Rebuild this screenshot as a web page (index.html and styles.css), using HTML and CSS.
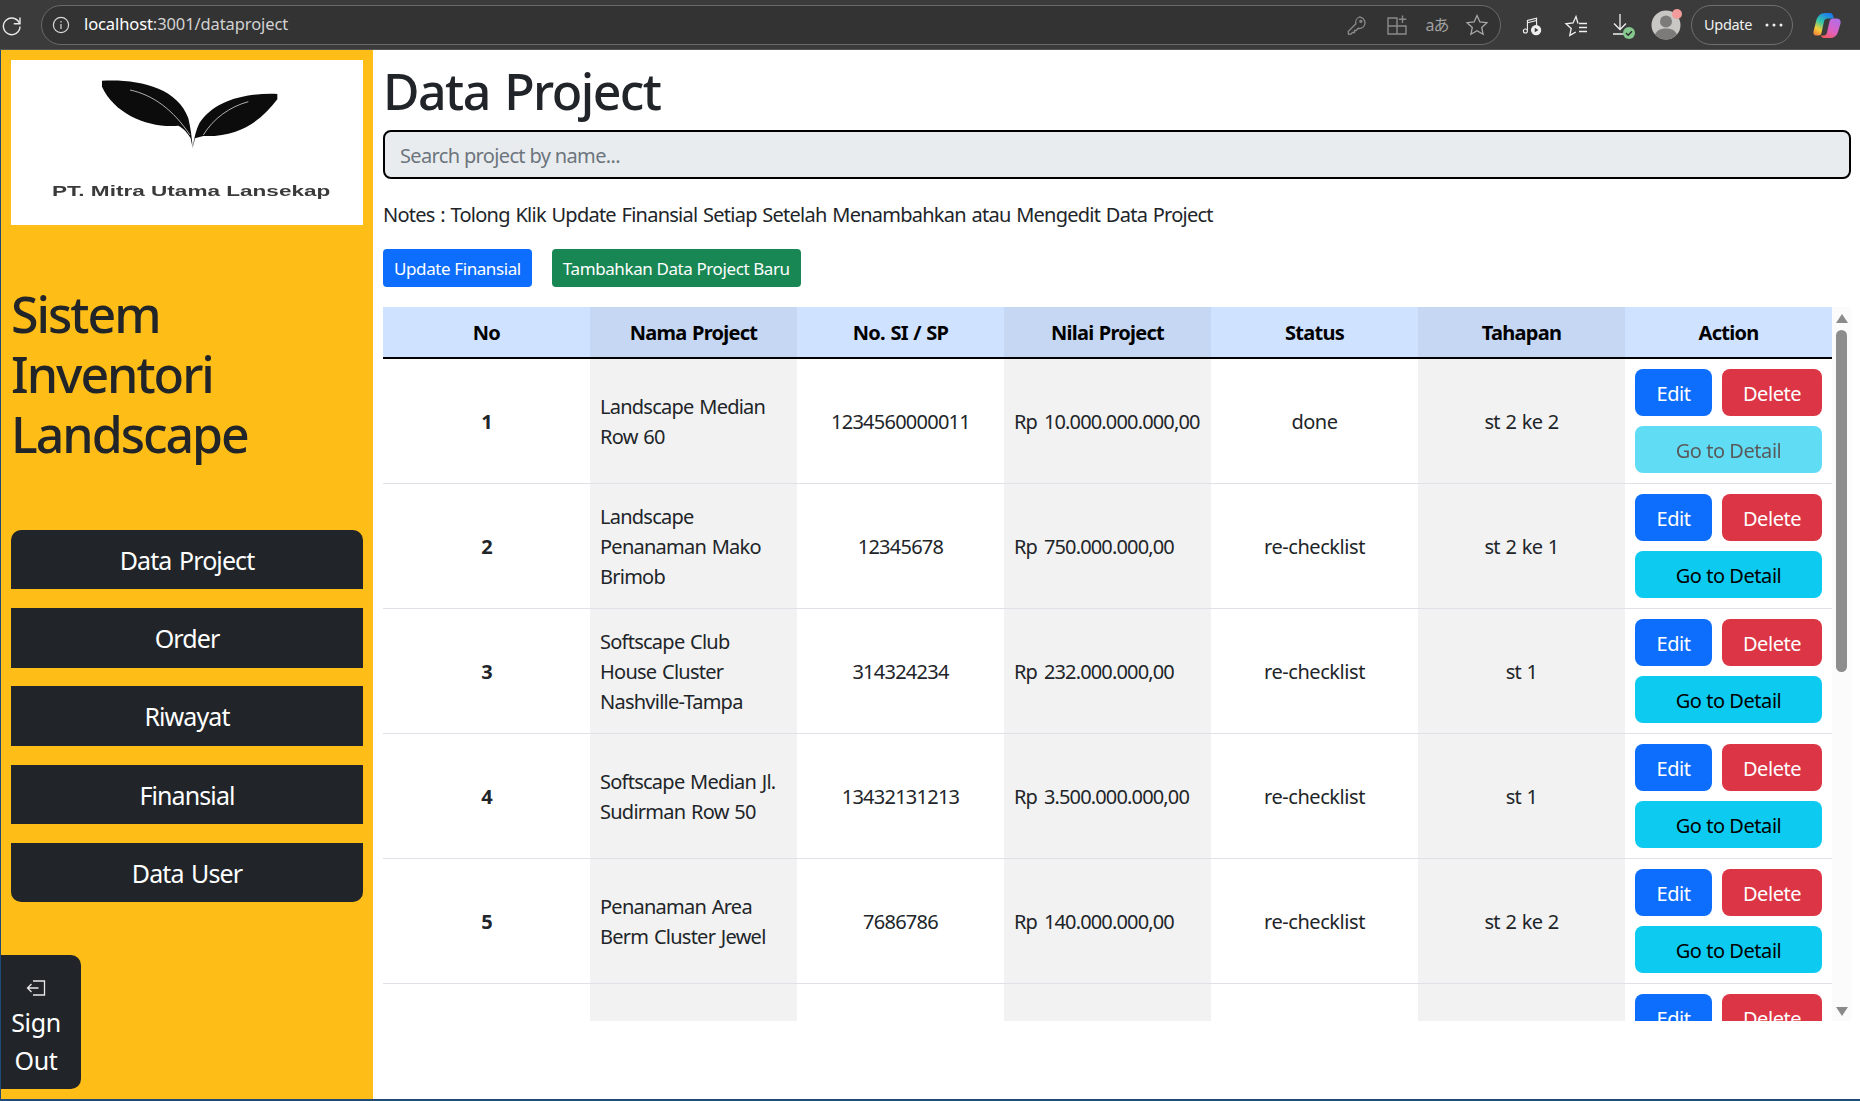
FILE: index.html
```html
<!DOCTYPE html>
<html>
<head>
    <title>Data Project</title>
    <meta name="viewport" content="width=device-width, initial-scale=1">
    <link rel="stylesheet" href="styles.css">
</head>
<body>

<div class="browser-bar">
    <svg class="reload" width="24" height="24" viewBox="0 0 24 24" fill="none" stroke="#e8e8e8" stroke-width="1.4">
        <path d="M19.5 10.5A8.3 8.3 0 1 0 20 13.5"/>
        <path d="M20 4.5v6.2h-6.2"/>
    </svg>
    <div class="address">
        <svg width="20" height="20" viewBox="0 0 20 20" fill="none" stroke="#d8d8d8" stroke-width="1.2">
            <circle cx="10" cy="10" r="7.6"/>
            <path d="M10 9v5M10 6v1.4"/>
        </svg>
        <span class="url"><b>localhost</b>:3001/dataproject</span>
        <div class="address-icons">
            <svg width="24" height="24" viewBox="0 0 24 24" fill="none" stroke="#8a8a8a" stroke-width="1.3">
                <path d="M14.5 4a6 6 0 0 1 5.5 6c0 3-2.500 5.500-5.500 5.500l-1.300-.2-2 2.200H9.500v2H7.500l-1.500 1.500-2.500.2-.3-2.700 7.700-7.700A5.700 5.700 0 0 1 14.500 4z"/>
                <circle cx="15.800" cy="8.300" r="1"/>
            </svg>
            <svg width="24" height="24" viewBox="0 0 24 24" fill="none" stroke="#8a8a8a" stroke-width="1.4">
                <path d="M3 5h9v16H3zM12 13h9v8h-9zM3 13h9"/>
                <path d="M17.500 2.500v7.500M13.800 6.200h7.400"/>
            </svg>
            <span class="translate">aあ</span>
            <svg width="24" height="24" viewBox="0 0 24 24" fill="none" stroke="#a8a8a8" stroke-width="1.3">
                <path d="M12 2.500l2.900 6.400 7 .8-5.200 4.700 1.400 6.900-6.100-3.500-6.100 3.500 1.400-6.900-5.200-4.700 7-.8z"/>
            </svg>
        </div>
    </div>
    <svg class="tool-music" width="22" height="22" viewBox="0 0 24 24" fill="none" stroke="#f0f0f0" stroke-width="1.2">
        <path d="M7 18V7l10-2.500V12M7 9.500l10-2.500"/>
        <circle cx="4.800" cy="18.500" r="2.200"/>
        <circle cx="16.500" cy="17.500" r="5" fill="#f0f0f0"/>
        <path d="M15 15v5l4-2.500z" fill="#3b3b3b" stroke="none"/>
    </svg>
    <svg class="tool-fav" width="24" height="24" viewBox="0 0 24 24" fill="none" stroke="#f0f0f0" stroke-width="1.3">
        <path d="M14 10.500l-2-7-3 6.500-7 .8 5.200 4.700-1.400 6.900 6-3.400"/>
        <path d="M15 10.500h8M15 14.500h8M15 18.500h8"/>
    </svg>
    <svg class="tool-down" width="28" height="28" viewBox="0 0 28 28" fill="none" stroke="#f0f0f0" stroke-width="1.3">
        <path d="M11 3v15M5 12.500l6 6 6-6M4 23h11"/>
        <circle cx="20" cy="22" r="6" fill="#86c98e" stroke="none"/>
        <path d="M17 22l2.200 2.200 3.800-4" stroke="#2d2d2d" stroke-width="1.500"/>
    </svg>
    <div class="avatar">
        <svg width="30" height="30" viewBox="0 0 30 30">
            <circle cx="15" cy="15" r="14.500" fill="#c9c7c4"/>
            <circle cx="15" cy="11.500" r="6" fill="#7d7b79"/>
            <path d="M4 24.500c2-4.500 6-6 11-6s9 1.500 11 6a14.500 14.500 0 0 1-22 0z" fill="#7d7b79"/>
        </svg>
        <span class="avatar-dot"></span>
    </div>
    <div class="update-pill">
        <span>Update</span>
        <svg width="18" height="4" viewBox="0 0 18 4" fill="#f0f0f0">
            <circle cx="2" cy="2" r="1.500"/><circle cx="9" cy="2" r="1.500"/><circle cx="16" cy="2" r="1.500"/>
        </svg>
    </div>
    <svg class="copilot" width="28" height="26" viewBox="0 0 28 26">
        <defs>
            <linearGradient id="cpLeft" x1="0.700" y1="0" x2="0.200" y2="1">
                <stop offset="0" stop-color="#1b7cf0"/>
                <stop offset="0.450" stop-color="#35c8a8"/>
                <stop offset="0.750" stop-color="#f4d03a"/>
                <stop offset="1" stop-color="#f4873a"/>
            </linearGradient>
            <linearGradient id="cpRight" x1="0.800" y1="0" x2="0.200" y2="1">
                <stop offset="0" stop-color="#b06ee8"/>
                <stop offset="0.600" stop-color="#e060c0"/>
                <stop offset="1" stop-color="#f25a5a"/>
            </linearGradient>
        </defs>
        <path d="M12 1h5c1.500 0 2.500 1 3 2.500l.8 3H14.500c-2 0-3 1-3.500 3L8.500 21c-.4 1.800-1.500 2.500-3 2.500H3.500C1 23.500 0 22 .5 19.500L3 9.500C4.300 4 7.500 1 12 1z" fill="url(#cpLeft)"/>
        <path d="M20 6.500h3.500c3 0 4.800 2 4 5l-2.500 8.500c-1.300 4-4 6-8 6h-6c-1.500 0-2.800-1-3.200-2.500h2.700c2 0 3-1 3.500-3L16.500 9.500c.5-2 1.800-3 3.500-3z" fill="url(#cpRight)"/>
    </svg>
</div>

<div class="app">
    <aside class="sidebar">
        <div class="logo">
            <svg width="352" height="165" viewBox="-87 0 1056 495">
                <path d="M186 62C290 56 412 80 445 175C452 205 456 235 458 265L452 235C440 215 430 205 415 197C330 205 225 165 186 80Z" fill="#0c0c0c"/>
                <path d="M270 90C340 105 400 150 450 225" fill="none" stroke="#d0d0d0" stroke-width="2.500"/>
                <path d="M712 102C610 98 520 125 478 190C468 210 462 235 458 265L465 235L490 228C600 232 665 180 712 118Z" fill="#0c0c0c"/>
                <path d="M625 125C570 140 520 175 490 225" fill="none" stroke="#d0d0d0" stroke-width="2.500"/>
                <text class="logo-text" x="36" y="408" textLength="835" lengthAdjust="spacingAndGlyphs">PT. Mitra Utama Lansekap</text>
            </svg>
        </div>
        <h1 class="brand">Sistem Inventori Landscape</h1>
        <nav class="side-nav">
            <a class="nav-btn nav-first">Data Project</a>
            <a class="nav-btn">Order</a>
            <a class="nav-btn">Riwayat</a>
            <a class="nav-btn">Finansial</a>
            <a class="nav-btn nav-last">Data User</a>
        </nav>
        <a class="sign-out">
            <svg width="20" height="16" viewBox="0 0 20 16" fill="none" stroke="#e8e8e8" stroke-width="1.300">
                <path d="M7 1h11.500v14H7"/>
                <path d="M12.500 8H1.500M5.500 4l-4 4 4 4"/>
            </svg>
            <span>Sign<br>Out</span>
        </a>
    </aside>

    <main class="content">
        <h1 class="page-title">Data Project</h1>
        <input class="search" type="text" placeholder="Search project by name...">
        <p class="notes">Notes : Tolong Klik Update Finansial Setiap Setelah Menambahkan atau Mengedit Data Project</p>
        <div class="top-actions">
            <button class="btn-sm btn-blue">Update Finansial</button>
            <button class="btn-sm btn-green">Tambahkan Data Project Baru</button>
        </div>

        <div class="table-wrap">
            <div class="table-view">
                <table>
                    <thead>
                        <tr>
                            <th>No</th><th>Nama Project</th><th>No. SI / SP</th><th>Nilai Project</th><th>Status</th><th>Tahapan</th><th>Action</th>
                        </tr>
                    </thead>
                    <tbody>
                        <tr>
                            <td class="num">1</td><td class="left">Landscape Median Row 60</td><td>1234560000011</td><td class="left money">Rp 10.000.000.000,00</td><td class="status">done</td><td>st 2 ke 2</td>
                            <td class="actions"><div class="act-grid"><button class="btn btn-blue">Edit</button><button class="btn btn-red">Delete</button><button class="btn btn-cyan btn-off" disabled>Go to Detail</button></div></td>
                        </tr>
                        <tr>
                            <td class="num">2</td><td class="left">Landscape Penanaman Mako Brimob</td><td>12345678</td><td class="left money">Rp 750.000.000,00</td><td class="status">re-checklist</td><td>st 2 ke 1</td>
                            <td class="actions"><div class="act-grid"><button class="btn btn-blue">Edit</button><button class="btn btn-red">Delete</button><button class="btn btn-cyan">Go to Detail</button></div></td>
                        </tr>
                        <tr>
                            <td class="num">3</td><td class="left">Softscape Club House Cluster Nashville-Tampa</td><td>314324234</td><td class="left money">Rp 232.000.000,00</td><td class="status">re-checklist</td><td>st 1</td>
                            <td class="actions"><div class="act-grid"><button class="btn btn-blue">Edit</button><button class="btn btn-red">Delete</button><button class="btn btn-cyan">Go to Detail</button></div></td>
                        </tr>
                        <tr>
                            <td class="num">4</td><td class="left">Softscape Median Jl. Sudirman Row 50</td><td>13432131213</td><td class="left money">Rp 3.500.000.000,00</td><td class="status">re-checklist</td><td>st 1</td>
                            <td class="actions"><div class="act-grid"><button class="btn btn-blue">Edit</button><button class="btn btn-red">Delete</button><button class="btn btn-cyan">Go to Detail</button></div></td>
                        </tr>
                        <tr>
                            <td class="num">5</td><td class="left">Penanaman Area Berm Cluster Jewel</td><td>7686786</td><td class="left money">Rp 140.000.000,00</td><td class="status">re-checklist</td><td>st 2 ke 2</td>
                            <td class="actions"><div class="act-grid"><button class="btn btn-blue">Edit</button><button class="btn btn-red">Delete</button><button class="btn btn-cyan">Go to Detail</button></div></td>
                        </tr>
                        <tr>
                            <td class="num"></td><td class="left"></td><td></td><td class="left"></td><td></td><td></td>
                            <td class="actions"><div class="act-grid"><button class="btn btn-blue">Edit</button><button class="btn btn-red">Delete</button></div></td>
                        </tr>
                    </tbody>
                </table>
            </div>
            <div class="scrollbar">
                <span class="arrow-up"></span>
                <span class="thumb"></span>
                <span class="arrow-down"></span>
            </div>
        </div>
    </main>
</div>

</body>
</html>
```

FILE: styles.css
```css
* {
    box-sizing: border-box;
}

html, body {
    height: 100%;
}

body {
    margin: 0;
    height: 1101px;
    overflow: hidden;
    background-color: #1f4a78;
    font-family: "Noto Sans", "Noto Sans CJK JP", sans-serif;
    font-size: 20px;
    line-height: 1.5;
    color: #212529;
}

/* browser toolbar */
.browser-bar {
    display: flex;
    align-items: center;
    height: 50px;
    background-color: #3b3b3b;
    border-bottom: 1px solid #555;
    color: #f0f0f0;
}

.reload {
    flex: none;
}

.address {
    display: flex;
    align-items: center;
    width: 1460px;
    height: 40px;
    margin-left: 17px;
    padding: 0 11px 0 9px;
    background-color: #333;
    border: 1px solid #6a6a6a;
    border-radius: 20px;
}

.url {
    margin-left: 13px;
    font-size: 16.500px;
    letter-spacing: -0.1px;
    color: #d2d2d2;
}

.url b {
    font-weight: 400;
    color: #fff;
}

.address-icons {
    display: flex;
    align-items: center;
    gap: 16px;
    margin-left: auto;
}

.translate {
    width: 24px;
    font-size: 16px;
    text-align: center;
    white-space: nowrap;
    letter-spacing: -1px;
    color: #a0a0a0;
}

.tool-music {
    margin-left: 20px;
}

.tool-fav {
    margin-left: 21px;
}

.tool-down {
    margin-left: 21px;
}

.avatar {
    position: relative;
    width: 30px;
    height: 30px;
    margin-left: 14px;
}

.avatar svg {
    display: block;
}

.avatar-dot {
    position: absolute;
    top: -1px;
    right: -1px;
    width: 10px;
    height: 10px;
    background-color: #f29b9b;
    border-radius: 50%;
}

.update-pill {
    display: flex;
    align-items: center;
    justify-content: space-between;
    width: 102px;
    height: 40px;
    margin-left: 10px;
    padding: 0 9px 0 12px;
    border: 1px solid #6f6f6f;
    border-radius: 20px;
    font-size: 14.500px;
    letter-spacing: -0.3px;
}

.copilot {
    margin-left: 20px;
}

/* page */
.app {
    display: flex;
    height: 1049px;
    margin-left: 1px;
    background-color: #fff;
}

.sidebar {
    display: flex;
    flex-direction: column;
    flex: none;
    width: 372px;
    padding: 10px;
    background-color: #ffbd17;
}

.logo {
    height: 165px;
    background-color: #fff;
}

.logo svg {
    display: block;
}

.logo-text {
    font-family: "Liberation Sans", sans-serif;
    font-size: 44px;
    font-weight: 700;
    fill: #3a3a3a;
    filter: blur(0.4px);
}

.brand {
    margin: 59px 0 66px 0;
    font-size: 50px;
    font-weight: 500;
    line-height: 60px;
    letter-spacing: -2px;
}

.side-nav {
    display: flex;
    flex-direction: column;
    gap: 18.800px;
}

.nav-btn {
    display: block;
    height: 59.400px;
    background-color: #212529;
    color: #fff;
    font-size: 25px;
    line-height: 61px;
    letter-spacing: -0.9px;
    word-spacing: 2px;
    text-align: center;
}

.nav-first {
    border-radius: 10px 10px 0 0;
}

.nav-last {
    border-radius: 0 0 10px 10px;
}

.sign-out {
    display: flex;
    flex-direction: column;
    align-items: center;
    width: 80px;
    height: 134px;
    margin: auto 0 0 -10px;
    padding: 25px 10px 0 0;
    background-color: #212529;
    border-radius: 0 10px 10px 0;
    color: #fff;
    font-size: 25px;
    line-height: 38px;
    letter-spacing: -0.4px;
    text-align: center;
}

.sign-out span {
    margin-top: 7px;
}

.content {
    flex: 1;
    padding: 11px 9px 0 10px;
    background-color: #fff;
}

.page-title {
    margin: 0 0 9px 0;
    font-size: 50px;
    font-weight: 500;
    line-height: 60px;
    letter-spacing: -1.55px;
    word-spacing: 3px;
}

.search {
    display: block;
    width: 1468px;
    height: 49px;
    padding: 2px 15px 0 15px;
    background-color: #e9ecef;
    border: 2px solid #000;
    border-radius: 8px;
    font-family: inherit;
    font-size: 20px;
    letter-spacing: -0.65px;
    outline: none;
}

.search::placeholder {
    color: #6c757d;
}

.notes {
    margin: 21px 0 19px 0;
    letter-spacing: -0.75px;
    word-spacing: 1.2px;
}

.top-actions {
    display: flex;
    gap: 20px;
    margin-bottom: 20px;
}

.btn-sm {
    height: 38px;
    padding: 0 11px;
    border: 0;
    border-radius: 4px;
    color: #fff;
    font-family: inherit;
    font-size: 17px;
    letter-spacing: -0.4px;
}

.btn-blue {
    background-color: #0d6efd;
}

.btn-green {
    background-color: #198754;
}

/* table */
.table-wrap {
    display: flex;
    width: 1468px;
    height: 714px;
}

.table-view {
    width: 1449px;
    overflow: hidden;
}

table {
    width: 1449px;
    table-layout: fixed;
    border-collapse: separate;
    border-spacing: 0;
}

th {
    height: 52px;
    padding: 2px 10px 0 10px;
    background-color: #cfe2ff;
    border-bottom: 2px solid #000;
    color: #000;
    font-weight: 700;
    letter-spacing: -0.75px;
    word-spacing: 1px;
    text-align: center;
}

th:nth-child(even) {
    background-color: #c5d7f2;
}

td {
    height: 125px;
    padding: 12px 10px 10px 10px;
    border-bottom: 1px solid #dee2e6;
    letter-spacing: -0.75px;
    word-spacing: 1.2px;
    text-align: center;
}

td:nth-child(even) {
    background-color: #f2f2f2;
}

td.left {
    text-align: left;
}

td.num {
    font-weight: 700;
}

td.money {
    white-space: nowrap;
    letter-spacing: -0.85px;
    word-spacing: 2.5px;
}

td.status {
    letter-spacing: -0.45px;
}

td.actions {
    padding: 10px;
    vertical-align: top;
}

.act-grid {
    display: grid;
    grid-template-columns: 77px 100px;
    gap: 10px;
}

.btn {
    height: 47px;
    padding: 2px 0 0 0;
    border: 0;
    border-radius: 8px;
    color: #fff;
    font-family: inherit;
    font-size: 20px;
    letter-spacing: -0.45px;
}

.btn-red {
    background-color: #dc3545;
}

.btn-cyan {
    grid-column: 1 / 3;
    background-color: #0dcaf0;
    color: #000;
}

.btn-off {
    opacity: 0.65;
}

/* drawn scrollbar */
.scrollbar {
    display: flex;
    flex-direction: column;
    align-items: center;
    width: 19px;
    padding-top: 7px;
    background-color: #fbfbfb;
}

.arrow-up,
.arrow-down {
    width: 0;
    height: 0;
    border-left: 6.500px solid transparent;
    border-right: 6.500px solid transparent;
}

.arrow-up {
    border-bottom: 9px solid #8a8a8a;
}

.arrow-down {
    margin-top: auto;
    margin-bottom: 5px;
    border-top: 9px solid #8a8a8a;
}

.thumb {
    width: 11px;
    height: 342px;
    margin-top: 7px;
    background-color: #8d8d8d;
    border-radius: 6px;
}
```
